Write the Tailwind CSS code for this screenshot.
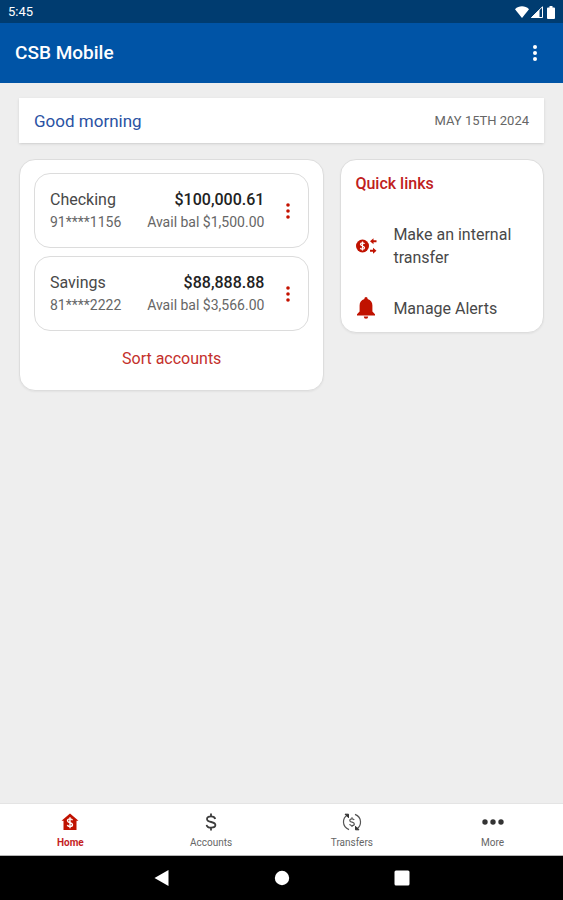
<!DOCTYPE html>
<html lang="en">
<head>
  <meta charset="UTF-8" />
  <meta name="viewport" content="width=device-width, initial-scale=1.0" />
  <title>CSB Mobile</title>
  <script src="https://cdn.jsdelivr.net/npm/@tailwindcss/browser@4"></script>
</head>
<body class="min-h-screen flex flex-col bg-[#eeeeee] text-[#484848] font-['Roboto',sans-serif]">

  <!-- Status bar -->
  <div class="h-[23px] shrink-0 flex items-center justify-between pl-2 pr-[6px] pt-px bg-[#003c70] text-white">
    <span class="text-[13px] leading-4">5:45</span>
    <div class="flex items-center gap-[2px]">
      <svg class="w-[14px] h-[12px]" viewBox="0 0 14 12" fill="currentColor"><path d="M0 3.2C4 -.6 10 -.6 14 3.2L7 12z" /></svg>
      <svg class="w-[12px] h-[12px]" viewBox="0 0 12 12"><path d="M.5 11.5h11V.8z" fill="none" stroke="currentColor" /><path d="M0 12h8.5V3.5z" fill="currentColor" /></svg>
      <svg class="w-[12px] h-[13px]" viewBox="0 0 12 13" fill="currentColor"><path d="M4.500 0h3v1.500H9a1 1 0 0 1 1 1V12a1 1 0 0 1-1 1H3a1 1 0 0 1-1-1V2.500a1 1 0 0 1 1-1h1.500z" /></svg>
    </div>
  </div>

  <!-- App bar -->
  <header class="h-[60px] shrink-0 flex items-center justify-between pl-[15px] pr-4 bg-[#0054a6] text-white">
    <h1 class="text-[19px] leading-6 font-medium">CSB Mobile</h1>
    <button type="button" aria-label="More options" class="w-6 h-8 flex items-center justify-center">
      <svg class="w-1 h-4" viewBox="0 0 4 16" fill="currentColor"><circle cx="2" cy="2" r="2" /><circle cx="2" cy="8" r="2" /><circle cx="2" cy="14" r="2" /></svg>
    </button>
  </header>

  <main class="flex-1 px-[19px] pt-[15px]">
    <section class="h-[45px] flex items-center justify-between px-[15px] bg-white shadow-sm">
      <h2 class="text-[17px] leading-6 text-[#2a52a3]">Good morning</h2>
      <p class="text-[13px] leading-5 text-[#666666]">MAY 15TH 2024</p>
    </section>

    <div class="mt-4 grid grid-cols-[3fr_2fr] gap-4 items-start">

      <!-- Accounts -->
      <section class="rounded-2xl border border-[#dddddd] bg-white px-[14px] pt-[13px] pb-[19px] shadow-xs">
        <ul class="flex flex-col gap-2">
          <li class="h-[75px] flex items-center rounded-2xl border border-[#dcdcdc] pl-[15px] pr-2">
            <div class="flex-1 pb-0.5">
              <p class="text-[16px] leading-6">Checking</p>
              <p class="text-[14px] leading-5 text-[#666666]">91****1156</p>
            </div>
            <div class="pb-0.5 text-right">
              <p class="text-[16px] leading-6 font-medium text-[#222222]">$100,000.61</p>
              <p class="text-[14px] leading-5 text-[#666666]">Avail bal $1,500.00</p>
            </div>
            <button type="button" aria-label="Checking options" class="ml-3 w-6 h-8 flex items-center justify-center text-[#c41200]">
              <svg class="w-1 h-4" viewBox="0 0 4 16" fill="currentColor"><circle cx="2" cy="2" r="1.800" /><circle cx="2" cy="8" r="1.800" /><circle cx="2" cy="14" r="1.800" /></svg>
            </button>
          </li>
          <li class="h-[75px] flex items-center rounded-2xl border border-[#dcdcdc] pl-[15px] pr-2">
            <div class="flex-1 pb-0.5">
              <p class="text-[16px] leading-6">Savings</p>
              <p class="text-[14px] leading-5 text-[#666666]">81****2222</p>
            </div>
            <div class="pb-0.5 text-right">
              <p class="text-[16px] leading-6 font-medium text-[#222222]">$88,888.88</p>
              <p class="text-[14px] leading-5 text-[#666666]">Avail bal $3,566.00</p>
            </div>
            <button type="button" aria-label="Savings options" class="ml-3 w-6 h-8 flex items-center justify-center text-[#c41200]">
              <svg class="w-1 h-4" viewBox="0 0 4 16" fill="currentColor"><circle cx="2" cy="2" r="1.800" /><circle cx="2" cy="8" r="1.800" /><circle cx="2" cy="14" r="1.800" /></svg>
            </button>
          </li>
        </ul>
        <button type="button" class="mt-4 block w-full text-center text-[16px] leading-6 text-[#c4302b]">Sort accounts</button>
      </section>

      <!-- Quick links -->
      <section class="rounded-2xl border border-[#dddddd] bg-white px-[14px] pt-3 pb-3 shadow-xs">
        <h2 class="text-[16px] leading-6 font-medium text-[#c02020]">Quick links</h2>
        <a href="#" class="mt-[27px] flex items-center gap-4">
          <svg class="w-[22px] h-[22px] shrink-0 text-[#c01200]" viewBox="0 0 22 22" fill="currentColor">
            <circle cx="7.500" cy="11" r="6.500" />
            <path d="M9.500 8.900C9.200 8 8.500 7.800 7.500 7.800c-1.200 0-2 .6-2 1.500 0 2.200 4 1.200 4 3.400 0 1-.8 1.500-2 1.500-1.100 0-1.900-.4-2.100-1.400M7.500 6.500v9" fill="none" stroke="white" stroke-width="1.300" />
            <path d="M15 6.200l3.500-3v2h3v2h-3v2zM21.500 15.800l-3.500 3v-2h-3v-2h3v-2z" />
          </svg>
          <span class="text-[16px] leading-[23px]">Make an internal transfer</span>
        </a>
        <a href="#" class="mt-[27px] flex items-center gap-4">
          <svg class="w-[22px] h-[24px] shrink-0 text-[#c01200]" viewBox="0 0 22 24" fill="currentColor">
            <path d="M11 1a1.600 1.600 0 0 1 1.600 1.600v.4c3.200.8 4.800 3.400 4.800 6.600v5.900l2.600 2.700v1.300H2v-1.300l2.600-2.700V9.600C4.600 6.400 6.200 3.800 9.400 3v-.4A1.600 1.600 0 0 1 11 1zM8.800 20.500h4.400a2.200 2.200 0 0 1-4.400 0z" />
          </svg>
          <span class="text-[16px] leading-[23px]">Manage Alerts</span>
        </a>
      </section>
    </div>
  </main>

  <!-- Tabs -->
  <nav class="h-[53px] shrink-0 grid grid-cols-4 border-t border-b border-t-[#e4e4e4] border-b-[#b5b5b5] bg-white text-[10px] leading-3 text-[#666666]">
    <a href="#" aria-current="page" class="flex flex-col items-center pt-2 gap-[5px] font-bold text-[#c41e1e]">
      <svg class="w-5 h-5" viewBox="0 0 20 20">
        <path d="M10 1.500l8.500 7.300h-2V18h-13V8.800h-2z" fill="#c01200" />
        <path d="M12.500 8.200C12.100 7.200 11.300 6.900 10 6.900c-1.500 0-2.500.7-2.500 1.800 0 2.700 5 1.400 5 4.100 0 1.200-1 1.800-2.500 1.800-1.400 0-2.400-.5-2.600-1.700M10 5.300v10.900" fill="none" stroke="white" stroke-width="1.400" />
      </svg>
      Home
    </a>
    <a href="#" class="flex flex-col items-center pt-2 gap-[5px]">
      <svg class="w-5 h-5" viewBox="0 0 20 20" fill="none" stroke="#3c3c3c" stroke-width="1.800">
        <path d="M14.200 6.900C13.700 5 12.300 4.300 10 4.300c-2.400 0-4 .9-4 2.600 0 4.300 8.400 1.900 8.400 6.200 0 1.700-1.700 2.600-4.300 2.600-2.500 0-4.200-.9-4.500-2.900M10 1.500v3M10 15.500v3" />
      </svg>
      Accounts
    </a>
    <a href="#" class="flex flex-col items-center pt-2 gap-[5px]">
      <svg class="w-5 h-5" viewBox="0 0 20 20" fill="none" stroke="#555555" stroke-width="1.200">
        <path d="M7 17.600C-.4 14.600.2 6 5.500 2.900M13 2.400c7.400 3 6.800 11.600 1.500 14.700" />
        <path d="M3 2.200h3.500v3.500zM17 17.800h-3.500v-3.500z" fill="#333333" stroke="#333333" stroke-width="1" />
        <path d="M12.200 8C11.800 7.100 11.100 6.800 10 6.800c-1.300 0-2.200.6-2.200 1.600 0 2.300 4.500 1.200 4.500 3.500 0 1-.9 1.600-2.300 1.600-1.300 0-2.200-.5-2.300-1.500M10 5.200v1.600M10 13.500V15" />
      </svg>
      Transfers
    </a>
    <a href="#" class="flex flex-col items-center pt-2 gap-[5px]">
      <svg class="w-6 h-5" viewBox="0 0 24 20" fill="#333333"><circle cx="4" cy="10" r="2.700" /><circle cx="12" cy="10" r="2.700" /><circle cx="20" cy="10" r="2.700" /></svg>
      More
    </a>
  </nav>

  <!-- System navigation -->
  <div class="h-11 shrink-0 flex items-center justify-center gap-[104px] bg-black text-white">
    <button type="button" aria-label="Back"><svg class="w-4 h-4" viewBox="0 0 16 16" fill="currentColor"><path d="M14.500 0v16L.5 8z" /></svg></button>
    <button type="button" aria-label="Home"><svg class="w-4 h-4" viewBox="0 0 16 16" fill="currentColor"><circle cx="8" cy="8" r="7.200" /></svg></button>
    <button type="button" aria-label="Recent apps"><svg class="w-4 h-4" viewBox="0 0 16 16" fill="currentColor"><rect x=".5" y=".5" width="15" height="15" rx="1.500" /></svg></button>
  </div>

</body>
</html>
